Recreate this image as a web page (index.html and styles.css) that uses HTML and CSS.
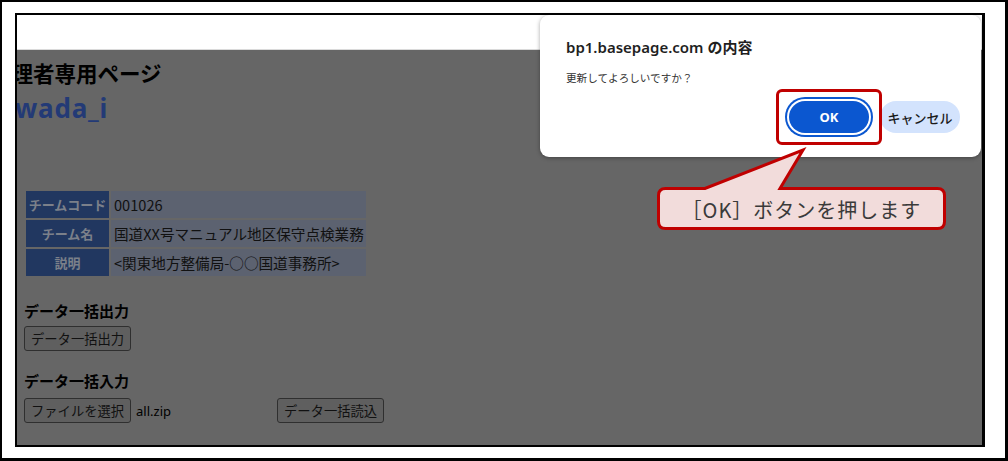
FILE: index.html
```html
<!DOCTYPE html>
<html lang="ja">
  <head>
    <meta charset="UTF-8" />
    <meta name="viewport" content="width=device-width, initial-scale=1.0" />
    <title>チーム管理</title>
    <link rel="stylesheet" href="styles.css">
  </head>
  <body>
    <div class="shot">
      <div class="frame">
        <div class="toolbar"></div>
        <div class="page">
          <h1 class="page-title">管理者専用ページ</h1>
          <div class="user-name">wada_i</div>

          <table class="team">
            <tr>
              <th>チームコード</th>
              <td>001026</td>
            </tr>
            <tr>
              <th>チーム名</th>
              <td>国道XX号マニュアル地区保守点検業務</td>
            </tr>
            <tr>
              <th>説明</th>
              <td>&lt;関東地方整備局-○○国道事務所&gt;</td>
            </tr>
          </table>

          <h3 class="section export">データ一括出力</h3>
          <div class="row">
            <button class="btn">データ一括出力</button>
          </div>

          <h3 class="section import">データ一括入力</h3>
          <div class="row import-row">
            <span class="file-input">
              <button class="btn">ファイルを選択</button>
              <span class="file-name">all.zip</span>
            </span>
            <button class="btn">データ一括読込</button>
          </div>
        </div>
      </div>

      <div class="dialog">
        <div class="dialog-title">bp1.basepage.com の内容</div>
        <div class="dialog-msg">更新してよろしいですか？</div>
        <div class="dialog-actions">
          <button class="dlg-btn ok">OK</button>
          <button class="dlg-btn cancel">キャンセル</button>
        </div>
      </div>

      <div class="highlight"></div>

      <div class="callout">
        <svg width="310" height="100" viewBox="0 0 310 100">
          <path d="M15.5 48.5 H55 L153 10 L130 48.5 H287.5 Q294.5 48.5 294.5 55.5 V81.5 Q294.5 88.5 287.5 88.5 H15.5 Q8.5 88.5 8.5 81.5 V55.5 Q8.5 48.5 15.5 48.5 Z"
                fill="#f2dcdb" stroke="#c00000" stroke-width="3" stroke-linejoin="miter" />
        </svg>
        <span class="callout-text">［OK］ボタンを押します</span>
      </div>
    </div>
  </body>
</html>
```

FILE: styles.css
```css
body {
  margin: 0;
  background-color: #fff;
  font-family: "Noto Sans CJK JP", sans-serif;
  color: #000;
}

/* outer picture frame */
.shot {
  position: relative;
  width: 1008px;
  height: 461px;
  box-sizing: border-box;
  border: solid #000;
  border-width: 2px 3px 3px 2px;
  padding: 11px 20px 11px 13px;
}

.frame {
  height: 434px;
  box-sizing: border-box;
  border: 2px solid #000;
  border-right-width: 3px;
  display: flex;
  flex-direction: column;
  overflow: hidden;
}

.toolbar {
  height: 35px;
  box-sizing: border-box;
  background-color: #fff;
  border-bottom: 1px solid #dadada;
}

/* page behind the modal, already dimmed */
.page {
  flex: 1;
  background-color: #666;
  padding-left: 7px;
  display: flex;
  flex-direction: column;
  align-items: flex-start;
  overflow: hidden;
}

.page-title {
  margin: 8px 0 0 -34px;
  font-size: 21.5px;
  line-height: 30px;
  font-weight: 700;
  white-space: nowrap;
  color: #000;
}

.user-name {
  margin: 4px 0 0 -9px;
  font-family: "Noto Sans", "Noto Sans CJK JP", sans-serif;
  font-size: 26px;
  line-height: 32px;
  letter-spacing: 0.8px;
  font-weight: 700;
  color: #233a76;
}

.team {
  margin-top: 65px;
  border-spacing: 2px;
  font-size: 14.6px;
}
.team th,
.team td {
  height: 27px;
  padding: 0 2px;
  white-space: nowrap;
}
.team td {
  padding-left: 3px;
}
.team th {
  width: 79px;
  background-color: #213760;
  color: #7b808a;
  font-size: 13px;
  font-weight: 700;
  text-align: center;
}
.team td {
  background-color: #5c6270;
  color: #111;
  text-align: left;
}

.section {
  margin: 0;
  font-size: 15px;
  line-height: 20px;
  font-weight: 700;
  color: #000;
}
.section.export {
  margin-top: 23px;
}
.section.import {
  margin-top: 20px;
}

.row {
  display: flex;
  align-items: center;
  margin-top: 5px;
}
.import-row {
  margin-top: 7px;
}

.btn {
  height: 25px;
  padding: 0 6px;
  font-family: "Noto Sans CJK JP", sans-serif;
  font-size: 13.3px;
  color: #111;
  background-color: #5f5f5f;
  border: 1px solid #2f2f2f;
  border-radius: 3px;
}

.file-input {
  display: flex;
  align-items: center;
  width: 253px;
}
.file-name {
  margin-left: 5px;
  font-family: "Noto Sans", sans-serif;
  font-size: 13px;
  color: #000;
}

/* confirm dialog */
.dialog {
  position: absolute;
  left: 538px;
  top: 13px;
  width: 441px;
  height: 142px;
  box-sizing: border-box;
  padding: 22px 21px 0 26px;
  background-color: #fff;
  border-radius: 9px;
  box-shadow: 0 1px 4px rgba(0, 0, 0, 0.35);
  font-family: "Noto Sans", "Noto Sans CJK JP", sans-serif;
  color: #1f1f1f;
}
.dialog-title {
  font-size: 15px;
  line-height: 20px;
  font-weight: 600;
}
.dialog-msg {
  margin-top: 13px;
  font-size: 10.6px;
  line-height: 16px;
  color: #333;
}
.dialog-actions {
  display: flex;
  justify-content: flex-end;
  gap: 11px;
  margin-top: 15px;
}
.dlg-btn {
  width: 80px;
  height: 32px;
  border: none;
  border-radius: 16px;
  font-family: "Noto Sans", "Noto Sans CJK JP", sans-serif;
  font-size: 13px;
  font-weight: 700;
}
.dlg-btn.ok {
  background-color: #0b57d0;
  color: #fff;
  box-shadow: 0 0 0 2px #fff, 0 0 0 4px #0b57d0;
}
.dlg-btn.cancel {
  background-color: #d3e3fd;
  color: #1a1a1a;
  font-weight: 500;
}

/* red marker around the OK button */
.highlight {
  position: absolute;
  left: 774px;
  top: 87px;
  width: 106px;
  height: 56px;
  box-sizing: border-box;
  border: 3px solid #c00000;
  border-radius: 6px;
}

.callout {
  position: absolute;
  left: 648px;
  top: 138px;
  width: 310px;
  height: 100px;
}
.callout svg {
  display: block;
}
.callout-text {
  position: absolute;
  left: 8px;
  right: 15px;
  top: 49px;
  height: 40px;
  display: flex;
  align-items: center;
  justify-content: center;
  font-family: "Noto Sans CJK JP", sans-serif;
  font-size: 20px;
  letter-spacing: 1px;
  color: #3a3a3a;
  white-space: nowrap;
}
```
